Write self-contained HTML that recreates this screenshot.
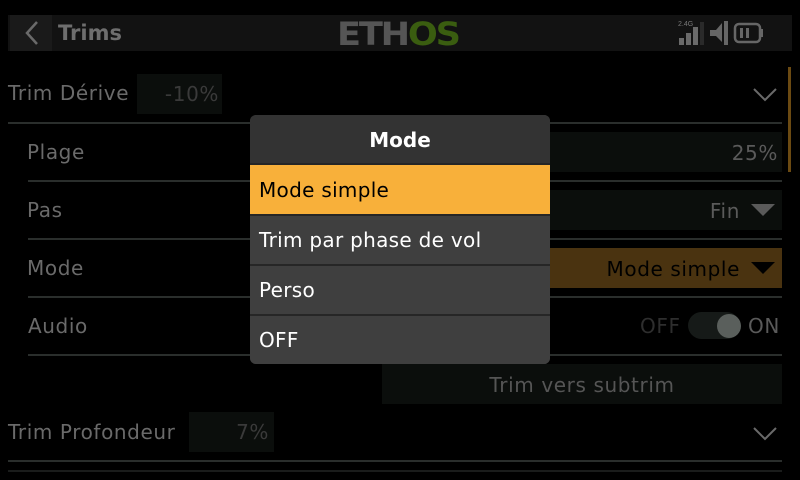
<!DOCTYPE html>
<html><head><meta charset="utf-8"><style>
*{margin:0;padding:0;box-sizing:border-box}
body{width:800px;height:480px;background:#000;overflow:hidden;position:relative;font-family:"DejaVu Sans","Liberation Sans",sans-serif;color:#6a6a6a}
.a{position:absolute}
.t{font-size:20px;line-height:24px;letter-spacing:0.6px}
.ln{position:absolute;height:2px;background:#2a2e2c}
.box{position:absolute;background:#0b0e0c}
.pi{position:absolute;left:250px;width:300px;height:48px;background:#3f3f3f;color:#fff;font-size:20px;letter-spacing:0.3px;line-height:48px;padding-left:9px;border-top:2px solid #262626}
</style></head><body>
<div class="a" style="left:8px;top:15px;width:784px;height:36px;background:#121212"></div>
<div class="a" style="left:10px;top:15px;width:42px;height:36px;background:#1a1a1a"></div>
<svg class="a" style="left:22px;top:19px" width="20" height="28"><path d="M15 3 L5 14 L15 25" stroke="#6a6a6a" stroke-width="2.5" fill="none"/></svg>
<div class="a" style="left:58px;top:19px;font-size:21px;font-weight:bold;color:#6e6e6e;line-height:28px">Trims</div>
<div class="a" style="left:337px;top:15px;font-size:32px;font-weight:bold;line-height:38px;letter-spacing:-2px;transform:scaleX(1.1);transform-origin:left"><span style="color:#555">ETH</span><span style="color:#3a5d10">OS</span></div>
<svg class="a" style="left:676px;top:18px" width="110" height="30">
<text x="2" y="8" font-size="7" fill="#777" font-family="Liberation Sans">2.4G</text>
<rect x="3" y="20" width="5" height="7" fill="#6a6a6a"/><rect x="10" y="15" width="5" height="12" fill="#6a6a6a"/><rect x="17" y="9" width="5" height="18" fill="#6a6a6a"/><rect x="24" y="4" width="4" height="23" fill="#2a2a2a"/>
<path d="M34 12 L40 12 L46 5 L46 24 L40 18 L34 18Z" fill="#666"/><rect x="48" y="3" width="4" height="24" fill="#666"/>
<rect x="59" y="6" width="25" height="18" rx="4" stroke="#666" stroke-width="2.5" fill="none"/><rect x="84" y="11" width="3" height="8" fill="#666"/><rect x="64" y="10" width="3" height="10" fill="#666"/><rect x="70" y="10" width="3" height="10" fill="#666"/>
</svg>
<div class="a" style="left:788px;top:67px;width:3px;height:105px;background:#6b4a12"></div>

<div class="a t" style="left:8px;top:81px">Trim Dérive</div>
<div class="box" style="left:137px;top:74px;width:85px;height:40px"></div>
<div class="a t" style="left:137px;top:82px;width:82px;text-align:right;color:#3a3a3a">-10%</div>
<svg class="a" style="left:752px;top:86px" width="28" height="18"><path d="M2 3 L13 14 L24 3" stroke="#6a6a6a" stroke-width="2" fill="none"/></svg>
<div class="ln" style="left:8px;top:122px;width:774px"></div>

<div class="a t" style="left:27px;top:140px">Plage</div>
<div class="box" style="left:382px;top:132px;width:400px;height:40px"></div>
<div class="a t" style="left:600px;top:141px;width:178px;text-align:right;color:#5a5a5a">25%</div>
<div class="ln" style="left:28px;top:180px;width:754px"></div>

<div class="a t" style="left:27px;top:198px">Pas</div>
<div class="box" style="left:382px;top:190px;width:400px;height:40px"></div>
<div class="a t" style="left:600px;top:199px;width:140px;text-align:right;color:#5a5a5a">Fin</div>
<svg class="a" style="left:750px;top:203px" width="28" height="16"><path d="M1 1 L25 1 L13 13Z" fill="#5a5a5a"/></svg>
<div class="ln" style="left:28px;top:238px;width:754px"></div>

<div class="a t" style="left:27px;top:256px">Mode</div>
<div class="a" style="left:382px;top:248px;width:400px;height:40px;background:#4a3310"></div>
<div class="a t" style="left:480px;top:257px;width:260px;text-align:right;color:#000">Mode simple</div>
<svg class="a" style="left:750px;top:261px" width="28" height="16"><path d="M1 1 L25 1 L13 13Z" fill="#000"/></svg>
<div class="ln" style="left:28px;top:296px;width:754px"></div>

<div class="a t" style="left:28px;top:314px">Audio</div>
<div class="a t" style="left:640px;top:314px;color:#2e2e2e">OFF</div>
<div class="a" style="left:688px;top:312px;width:52px;height:27px;border-radius:14px;background:#161a18"></div>
<div class="a" style="left:717px;top:314px;width:24px;height:24px;border-radius:12px;background:#5a5f5c"></div>
<div class="a t" style="left:748px;top:314px;color:#5a5a5a">ON</div>
<div class="ln" style="left:28px;top:354px;width:754px"></div>

<div class="box" style="left:382px;top:364px;width:400px;height:40px"></div>
<div class="a t" style="left:382px;top:373px;width:400px;text-align:center;color:#555">Trim vers subtrim</div>

<div class="a t" style="left:8px;top:420px">Trim Profondeur</div>
<div class="box" style="left:189px;top:412px;width:85px;height:40px"></div>
<div class="a t" style="left:189px;top:420px;width:80px;text-align:right;color:#3a3a3a">7%</div>
<svg class="a" style="left:752px;top:425px" width="28" height="18"><path d="M2 3 L13 14 L24 3" stroke="#6a6a6a" stroke-width="2" fill="none"/></svg>
<div class="ln" style="left:8px;top:460px;width:774px"></div>
<div class="ln" style="left:8px;top:470px;width:774px;background:#1a1c1b"></div>

<div class="a" style="left:250px;top:115px;width:300px;height:249px;border-radius:6px;background:#3f3f3f;overflow:hidden">
<div style="height:50px;background:#333;color:#fff;font-weight:bold;font-size:20px;text-align:center;line-height:50px">Mode</div>
</div>
<div class="pi" style="top:163px;background:#f8b03a;color:#000;height:51px;line-height:50px">Mode simple</div>
<div class="pi" style="top:214px">Trim par phase de vol</div>
<div class="pi" style="top:264px">Perso</div>
<div class="pi" style="top:314px;height:50px;border-radius:0 0 6px 6px">OFF</div>
</body></html>
